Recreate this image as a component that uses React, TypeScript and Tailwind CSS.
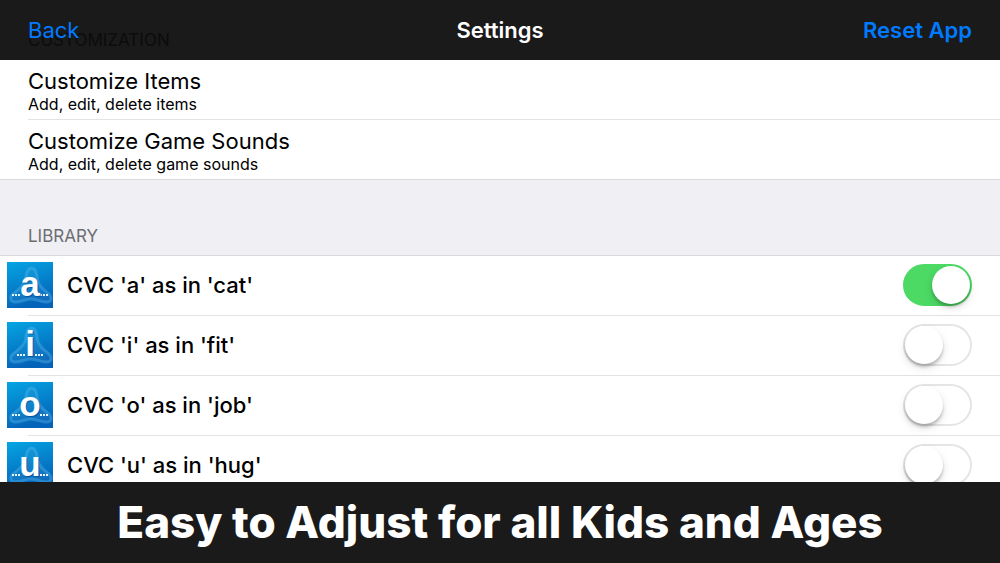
import { useId, useState } from 'react'

interface LibraryItem {
  id: string
  letter: string
  label: string
  // distance from the centre of the tile to the first dot
  dotGap: number
  enabled: boolean
}

const CUSTOMIZE_ROWS = [
  { title: 'Customize Items', detail: 'Add, edit, delete items' },
  { title: 'Customize Game Sounds', detail: 'Add, edit, delete game sounds' },
]

const LIBRARY: LibraryItem[] = [
  { id: 'cvc-a', letter: 'a', label: "CVC 'a' as in 'cat'", dotGap: 11, enabled: true },
  { id: 'cvc-i', letter: 'i', label: "CVC 'i' as in 'fit'", dotGap: 6, enabled: false },
  { id: 'cvc-o', letter: 'o', label: "CVC 'o' as in 'job'", dotGap: 11, enabled: false },
  { id: 'cvc-u', letter: 'u', label: "CVC 'u' as in 'hug'", dotGap: 11, enabled: false },
]

function LetterTile({ letter, dotGap }: { letter: string; dotGap: number }) {
  const gradientId = useId()
  const dots = [0, 3, 6].flatMap((step) => [23 - dotGap - step, 23 + dotGap + step])

  return (
    <svg viewBox="0 0 46 46" className="size-[46px] shrink-0" aria-hidden="true">
      <defs>
        <linearGradient id={gradientId} x1="0" y1="0" x2="0.3" y2="1">
          <stop offset="0" stopColor="#05a5e3" />
          <stop offset="1" stopColor="#0463b8" />
        </linearGradient>
      </defs>
      <rect width="46" height="46" fill={`url(#${gradientId})`} />
      <path
        d="M24.500 6C20 6 19 12 18.500 18C17 24 12 27 6 32C2.500 35 3 39.500 7.500 40C14 40.500 18 37 24 37C30 37 35 40.500 40.500 40C45 39.500 45 35 42 32C36 27 32 24 30.500 18C30 12 29 6 24.500 6Z"
        fill="#fff"
        fillOpacity="0.05"
        stroke="#55b4ea"
        strokeOpacity="0.4"
        strokeWidth="3"
      />
      {dots.map((x) => (
        <rect key={x} x={x - 1} y="32" width="2" height="2" fill="#e4f4ff" />
      ))}
      <text
        x="24"
        y="35"
        textAnchor="middle"
        fill="#043f86"
        fillOpacity="0.6"
        className="font-['Liberation_Sans',sans-serif] text-[35px] font-bold"
      >
        {letter}
      </text>
      <text
        x="23"
        y="34"
        textAnchor="middle"
        fill="#fff"
        className="font-['Liberation_Sans',sans-serif] text-[35px] font-bold"
      >
        {letter}
      </text>
    </svg>
  )
}

function Toggle({ id, checked, onChange }: { id: string; checked: boolean; onChange: () => void }) {
  return (
    <input
      id={id}
      type="checkbox"
      role="switch"
      checked={checked}
      onChange={onChange}
      className="flex h-[42px] w-[69px] shrink-0 cursor-pointer appearance-none items-center rounded-full border-2 border-[#e5e5e5] bg-white before:size-[38px] before:rounded-full before:bg-white before:shadow-[0_3px_3px_rgba(0,0,0,0.2),0_4px_10px_rgba(0,0,0,0.12)] checked:justify-end checked:border-[#4cd964] checked:bg-[#4cd964]"
    />
  )
}

export default function App() {
  const [enabled, setEnabled] = useState<Record<string, boolean>>(
    Object.fromEntries(LIBRARY.map((item) => [item.id, item.enabled]))
  )

  const toggle = (id: string) => setEnabled((prev) => ({ ...prev, [id]: !prev[id] }))

  return (
    <div className="flex h-screen flex-col bg-[#efeff4] font-['Inter',sans-serif] text-black">
      <header className="relative grid h-[60px] shrink-0 grid-cols-3 items-center bg-[#1a1a1a] px-7 text-[22px]">
        <span className="absolute bottom-2 left-7 text-[17px] leading-6 text-[#0c0c0c]">CUSTOMIZATION</span>
        <button type="button" className="relative justify-self-start text-[#007aff]">Back</button>
        <h1 className="justify-self-center font-semibold text-white">Settings</h1>
        <button type="button" className="justify-self-end font-semibold text-[#007aff]">Reset App</button>
      </header>

      <main className="min-h-0 flex-1 overflow-hidden">
        <ul className="border-b border-[#d9d9dc] bg-white pl-7">
          {CUSTOMIZE_ROWS.map((row) => (
            <li key={row.title} className="border-b border-[#e2e2e4] last:border-b-0">
              <button type="button" className="flex h-[59px] w-full flex-col justify-center text-left">
                <span className="text-[22px] leading-7">{row.title}</span>
                <span className="text-base leading-[18px]">{row.detail}</span>
              </button>
            </li>
          ))}
        </ul>

        <h2 className="px-7 pt-[45px] pb-[7px] text-[17px] leading-[23px] text-[#6d6d72]">LIBRARY</h2>

        <ul className="border-t border-[#d9d9dc] bg-white">
          {LIBRARY.map((item) => (
            <li key={item.id}>
              <div className="flex h-[59px] items-center pr-7 pb-0.5 pl-[7px]">
                <LetterTile letter={item.letter} dotGap={item.dotGap} />
                <label htmlFor={item.id} className="flex-1 pt-0.5 pl-3.5 text-[22px] font-medium">
                  {item.label}
                </label>
                <Toggle id={item.id} checked={enabled[item.id]} onChange={() => toggle(item.id)} />
              </div>
              <div className="ml-7 h-px bg-[#e2e2e4]" />
            </li>
          ))}
        </ul>
      </main>

      <footer className="flex h-[81px] shrink-0 items-center justify-center bg-[#1a1a1a] pb-0.5">
        <p className="text-[44px] font-extrabold text-white">Easy to Adjust for all Kids and Ages</p>
      </footer>
    </div>
  )
}
